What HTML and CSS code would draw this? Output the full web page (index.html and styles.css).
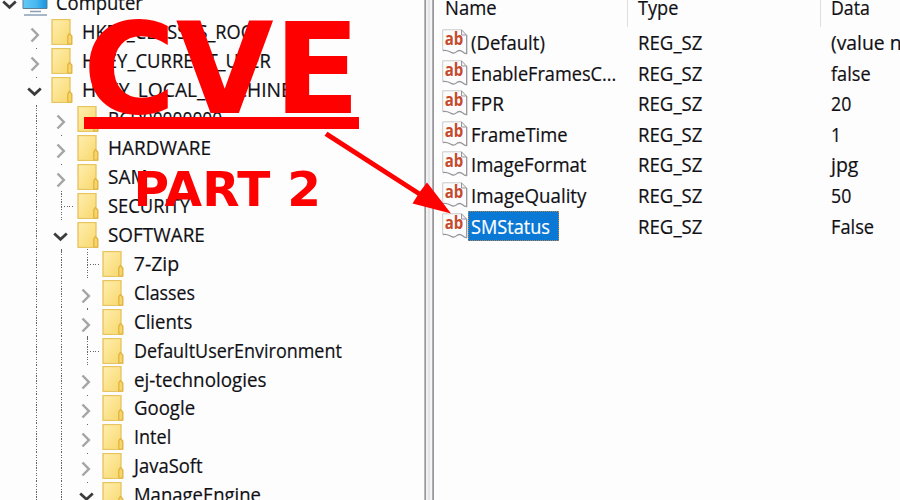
FILE: index.html
```
<!DOCTYPE html>
<html lang="en">
<head>
<meta charset="utf-8">
<title>Registry Editor</title>
<link rel="stylesheet" href="styles.css">
</head>
<body>
<svg class="defs" aria-hidden="true">
  <symbol id="folder" viewBox="0 0 22 26">
    <path d="M1 .7H19V15.500L20.500 17V25.300H1Z" fill="#fbe38d" stroke="#e6c45f" stroke-width="1.300"/>
    <path d="M2 1.500H18V24H2Z" fill="url(#paper)"/>
    <path d="M16.800 25V17L18.300 14.500L20.800 17V25Z" fill="#f8d56c" stroke="#dfb23f" stroke-width="1.200"/>
  </symbol>
  <symbol id="right" viewBox="0 0 10 16"><path d="M1.500 1.500L7.800 8L1.500 14.500" fill="none" stroke="#a5a5a5" stroke-width="2.500"/></symbol>
  <symbol id="down" viewBox="0 0 15 10"><path d="M1.200 1.500L7.500 7.300L13.800 1.500" fill="none" stroke="#3b3b3b" stroke-width="2.700"/></symbol>
  <symbol id="string" viewBox="0 0 26 26">
    <path d="M.7 .8H19.500L25 6.500V24.500C21 25 21 21.500 17.500 21.500C14 21.500 14.500 24.500 11 24C7.500 23.500 7 20.500 .7 21.500Z" fill="#fdfcfd"/>
    <path d="M.7 21V.8H19.500" fill="none" stroke="#c9c9cb" stroke-width="1"/>
    <path d="M19.500 .8V6H24.500Z" fill="#f3f3f3" stroke="#96969a" stroke-width="1"/>
    <path d="M24.700 6V24.500C21 25 21 21.500 17.500 21.500C14 21.500 14.500 24.500 11 24C7.500 23.500 7 20.500 .7 21.500" fill="none" stroke="#97979b" stroke-width="1.300"/>
    <text class="ab" x="2.700" y="16.200" textLength="18.500" lengthAdjust="spacingAndGlyphs">ab</text>
  </symbol>
  <defs><linearGradient id="paper" x2="1" y2="1"><stop stop-color="#ffedac"/><stop offset="1" stop-color="#f8d970"/></linearGradient>
  <linearGradient id="screen" x2="1" y2="0"><stop stop-color="#62c9f6"/><stop offset=".55" stop-color="#4ab8f0"/><stop offset="1" stop-color="#1593dc"/></linearGradient></defs>
</svg>
<main class="window">
  <nav class="tree" id="tree"></nav>
  <div class="splitter"></div>
  <section class="values">
    <div class="header">
      <div class="cell name"><span class="fit" data-w="52">Name</span></div>
      <div class="cell type"><span class="fit" data-w="40">Type</span></div>
      <div class="cell data"><span class="fit" data-w="39">Data</span></div>
    </div>
    <div id="rows"></div>
  </section>
</main>
<div class="overlay">
  <div class="title"><span class="fit" data-w="277">CVE</span></div>
  <div class="rule"></div>
  <div class="subtitle"><span class="fit" data-w="188">PART 2</span></div>
  <svg class="arrow" viewBox="0 0 900 500"><path d="M324.500 135.700L327.500 131.700L420 191.500L427 182.500L451 213.500L412.500 203.500L417.500 195.500Z" fill="#f00"/></svg>
</div>
<script src="app.js"></script>
</body>
</html>
```
FILE: styles.css
```
* { box-sizing: border-box; }
body {
  margin: 0;
  width: 900px;
  height: 500px;
  overflow: hidden;
  position: relative;
  background: #fefdfe;
  color: #101014;
  font: 19.500px/28.900px "Open Sans", "Noto Sans", sans-serif;
}
.defs { position: absolute; width: 0; height: 0; }
.ab { font: bold 17px "Open Sans", sans-serif; fill: #c54a2d; }
.window { display: flex; height: 500px; overflow: hidden; -webkit-text-stroke: .2px; }
.tree { width: 424px; flex: none; margin-top: -11.200px; }
.node { display: flex; height: 28.940px; align-items: center; }
.guide { width: 25.700px; height: 28.940px; flex: none; position: relative; }
.guide:first-child { margin-left: -.5px; }
.line::before, .joint::before, .tick::before {
  content: "";
  position: absolute;
  left: 10.500px;
  top: 0;
  width: 1px;
  height: 28.940px;
  background: repeating-linear-gradient(#66666a 0 1.250px, transparent 1.250px 2.570px);
}
.tick::before { top: auto; bottom: -2.500px; height: 1.300px; background: #66666a; }
.joint::after {
  content: "";
  position: absolute;
  left: 13.200px;
  top: 14.500px;
  width: 9px;
  height: 1px;
  background: repeating-linear-gradient(90deg, #66666a 0 1.250px, transparent 1.250px 2.570px);
}
.chevron { position: absolute; }
.chevron.right { width: 10px; height: 16px; left: 4.800px; top: 9.400px; }
.chevron.down { width: 15px; height: 10px; left: 2px; top: 11.300px; }
.folder { width: 22px; height: 26px; flex: none; margin-right: 9.500px; }
.pc { width: 26px; height: 26px; flex: none; margin: 0 8px 0 -3px; }
.fit { display: inline-block; white-space: pre; transform-origin: 0 50%; }
.node .fit { position: relative; top: .5px; }
.splitter {
  width: 10px;
  flex: none;
  background: linear-gradient(90deg, #b9b9bc 0 1px, #98989c 1px 2px, #f1f1f3 2px 4px, #e4e4e6 4px 6px, #f5f5f7 6px 8px, #aeaeb2 8px 9px, #98989c 9px 10px);
}
.values { flex: 1; min-width: 0; }
.header { display: flex; height: 27px; }
.header .cell { height: 27px; line-height: 16px; }
.cell { flex: none; overflow: hidden; white-space: nowrap; }
.name { width: 193px; padding-left: 11px; }
.type { width: 193px; padding-left: 10px; }
.data { width: 80px; padding-left: 10px; }
.header .type, .header .data { border-left: 1px solid #dededf; }
.row { display: flex; height: 30.600px; line-height: 31.400px; }
.row .name { display: flex; padding-left: 8px; }
.icon { width: 26px; height: 26px; flex: none; margin-top: 2px; }
.label { height: 30.600px; padding-left: 3px; }
.row .type, .row .data { padding-left: 11px; }
.selected .label { background: #0a78d5; color: #fff; width: 91px; outline: 1px dotted #b9824b; outline-offset: -1px; }
.overlay { position: absolute; inset: 0; color: #f00; font-family: "DejaVu Sans", sans-serif; font-weight: bold; }
.title { position: absolute; left: 83px; top: 3px; font-size: 127px; line-height: 133px; }
.rule { position: absolute; left: 83.500px; top: 116.500px; width: 275px; height: 12.700px; background: #f00; }
.subtitle { position: absolute; left: 133.500px; top: 158.500px; font-size: 48.500px; line-height: 60px; }
.arrow { position: absolute; inset: 0; width: 900px; height: 500px; }
```
FILE: app.js
```
// Guide columns: . root column, l line, j joint, r collapsed, d expanded
const nodes = [
  ["d", "Computer", 87],
  [".r", "HKEY_CLASSES_ROOT", 183],
  [".r", "HKEY_CURRENT_USER", 189],
  [".d", "HKEY_LOCAL_MACHINE", 210],
  [".lr", "BCD00000000", 114],
  [".lr", "HARDWARE", 103],
  [".lr", "SAM", 40],
  [".lj", "SECURITY", 82],
  [".ld", "SOFTWARE", 97],
  [".llj", "7-Zip", 45],
  [".llr", "Classes", 61],
  [".llr", "Clients", 58],
  [".llj", "DefaultUserEnvironment", 208],
  [".llr", "ej-technologies", 132],
  [".llr", "Google", 61],
  [".llr", "Intel", 37],
  [".llr", "JavaSoft", 69],
  [".lld", "ManageEngine", 127]
];
const values = [
  ["(Default)", 74, "(value not set)", 127],
  ["EnableFramesC...", 145, "false", 40],
  ["FPR", 33, "20", 20],
  ["FrameTime", 97, "1", 10],
  ["ImageFormat", 115, "jpg", 27],
  ["ImageQuality", 115, "50", 20],
  ["SMStatus", 79, "False", 43]
];
const use = (id, cls) => `<svg class="${cls}"><use href="#${id}"/></svg>`;
const fit = (text, w) => `<span class="fit" data-w="${w}">${text}</span>`;
const guide = c => {
  if (c === "l") return '<div class="guide line"></div>';
  if (c === "j") return '<div class="guide joint"></div>';
  if (c === "r") return `<div class="guide tick">${use("right", "chevron right")}</div>`;
  if (c === "d") return `<div class="guide tick">${use("down", "chevron down")}</div>`;
  return "";
};
const computer = `<svg class="pc" viewBox="0 0 26 26"><path d="M1 0H25V18.500H1Z" fill="url(#screen)" stroke="#5b7f99" stroke-width="1"/><path d="M8 21.500H19M2 25H25" stroke="#8ca0b5" stroke-width="1.600"/></svg>`;
document.getElementById("tree").innerHTML = nodes.map(([g, text, w], i) => {
  // the first column belongs to the root's own expander
  const cols = i === 0
    ? `<div class="guide">${use("down", "chevron down")}</div>`
    : '<div class="guide"></div>' + [...g.slice(1)].map(guide).join("");
  return `<div class="node">${cols}${i === 0 ? computer : use("folder", "folder")}${fit(text, w)}</div>`;
}).join("");
document.getElementById("rows").innerHTML = values.map(([n, nw, d, dw], i) =>
  `<div class="row${i === 6 ? " selected" : ""}"><div class="cell name">${use("string", "icon")}<div class="label">${fit(n, nw)}</div></div>
   <div class="cell type">${fit("REG_SZ", 64)}</div><div class="cell data">${fit(d, dw)}</div></div>`).join("");
document.querySelectorAll(".fit").forEach(el => {
  el.style.transform = `scaleX(${el.dataset.w / el.offsetWidth})`;
});
```
